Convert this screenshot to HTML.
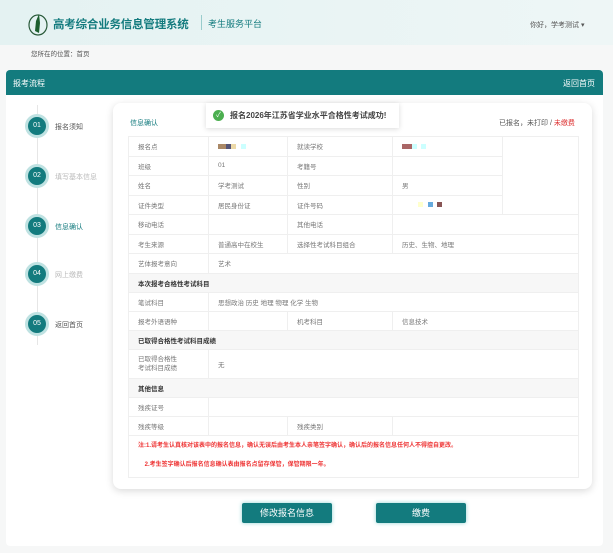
<!DOCTYPE html>
<html><head><meta charset="utf-8"><style>
*{margin:0;padding:0;box-sizing:border-box}
body{width:613px;height:553px;background:#f6f7f7;font-family:"Liberation Sans","Noto Sans CJK SC",sans-serif;position:relative;overflow:hidden;color:#666}
.a{position:absolute}
.hdr{left:0;top:0;width:613px;height:45px;background:linear-gradient(90deg,#e4f2f2,#eef6f6)}
.panel{left:6px;top:70px;width:597px;height:476px;background:#fff;border-radius:4px}
.bar{left:6px;top:70px;width:597px;height:25px;background:#137b7e;border-radius:4px 4px 0 0;color:#fff;font-size:8px}
.card{left:113px;top:103px;width:479px;height:386px;background:#fff;border-radius:8px;box-shadow:0 2px 8px rgba(0,0,0,.15)}
table{position:absolute;left:128px;top:136px;border-collapse:collapse;font-size:6.5px;color:#777;table-layout:fixed;width:450px}
td{border:1px solid #efefef;padding:0 0 0 9px;height:19px}
tr.r td{height:19.5px}
tr.s td{background:#f7f7f7;color:#333;font-weight:bold;height:19px}
.step{left:25px;width:24px;height:24px;border-radius:50%;background:#137b7e;border:3px solid #bfe2e2;color:#fff;font-size:7px;text-align:center;line-height:18px}
.sl{left:55px;font-size:7px}
.btn{top:503px;height:20px;background:#137b7e;color:#fff;font-size:9px;text-align:center;line-height:20px;border-radius:2px;box-shadow:0 0 4px #8fd3d3}
.blk{display:inline-block;width:5px;height:5px;vertical-align:middle}
</style></head><body>
<div class="a hdr"></div>
<svg class="a" style="left:27px;top:11px" width="22" height="26" viewBox="0 0 22 26"><ellipse cx="11" cy="14" rx="9" ry="10" fill="none" stroke="#2a5a3a" stroke-width="1.2"/><path d="M12 3 L9 10 L8 20 L12 22 L13 12 Z" fill="#1d5f2f"/></svg>
<div class="a" style="left:53px;top:16px;font-size:11.5px;font-weight:bold;color:#137b7e;letter-spacing:-0.2px">高考综合业务信息管理系统</div>
<div class="a" style="left:201px;top:15px;width:1px;height:15px;background:#9cc"></div>
<div class="a" style="left:208px;top:17px;font-size:9px;color:#137b7e">考生服务平台</div>
<div class="a" style="left:530px;top:20px;font-size:7px;color:#555">你好，学考测试 ▾</div>
<div class="a" style="left:31px;top:48px;font-size:6.5px;color:#555">您所在的位置：首页</div>
<div class="a panel"></div>
<div class="a bar"><span class="a" style="left:7px;top:8px">报考流程</span><span class="a" style="right:8px;top:8px">返回首页</span></div>
<div class="a" style="left:37px;top:105px;width:1px;height:240px;background:#e6e6e6"></div>
<div class="a step" style="top:114px">01</div><div class="a sl" style="top:122px;color:#555">报名须知</div>
<div class="a step" style="top:164px">02</div><div class="a sl" style="top:172px;color:#bbb">填写基本信息</div>
<div class="a step" style="top:214px">03</div><div class="a sl" style="top:222px;color:#137b7e">信息确认</div>
<div class="a step" style="top:262px">04</div><div class="a sl" style="top:270px;color:#bbb">网上缴费</div>
<div class="a step" style="top:312px">05</div><div class="a sl" style="top:320px;color:#555">返回首页</div>
<div class="a card"></div>
<div class="a" style="left:130px;top:118px;font-size:7px;color:#137b7e">信息确认</div>
<div class="a" style="left:499px;top:118px;font-size:7px;color:#555">已报名，未打印 / <span style="color:#d33">未缴费</span></div>
<div class="a" style="left:206px;top:103px;width:193px;height:25px;background:#fff;box-shadow:0 1px 5px rgba(0,0,0,.15);font-size:8px;font-weight:bold;color:#444;line-height:25px;padding-left:24px">报名2026年江苏省学业水平合格性考试成功!</div>
<div class="a" style="left:213px;top:110px;width:11px;height:11px;border-radius:50%;background:#4caf50;color:#fff;font-size:7px;text-align:center;line-height:11px">✓</div>
<table>
<colgroup><col style="width:80px"><col style="width:79px"><col style="width:105px"><col style="width:110px"><col style="width:76px"></colgroup>
<tr class="r"><td>报名点</td><td><span class="blk" style="background:#a86;width:8px"></span><span class="blk" style="background:#557"></span><span class="blk" style="background:#ecd9a8"></span> &nbsp;&nbsp;<span class="blk" style="background:#cff"></span></td><td>就读学校</td><td><span class="blk" style="background:#a66;width:10px"></span><span class="blk" style="background:#cff"></span> &nbsp;<span class="blk" style="background:#cff"></span></td><td rowspan="4"></td></tr>
<tr class="r"><td>班级</td><td>01</td><td>考籍号</td><td></td></tr>
<tr class="r"><td>姓名</td><td>学考测试</td><td>性别</td><td>男</td></tr>
<tr class="r"><td>证件类型</td><td>居民身份证</td><td>证件号码</td><td style="padding-left:25px"><span class="blk" style="background:#ffc"></span> &nbsp; <span class="blk" style="background:#6ad"></span> &nbsp;<span class="blk" style="background:#855"></span></td></tr>
<tr class="r"><td>移动电话</td><td></td><td>其他电话</td><td colspan="2"></td></tr>
<tr class="r"><td>考生来源</td><td>普通高中在校生</td><td>选择性考试科目组合</td><td colspan="2">历史、生物、地理</td></tr>
<tr class="r"><td>艺体报考意向</td><td colspan="4">艺术</td></tr>
<tr class="s"><td colspan="5">本次报考合格性考试科目</td></tr>
<tr><td>笔试科目</td><td colspan="4">思想政治 历史 地理 物理 化学 生物</td></tr>
<tr><td>报考外语语种</td><td></td><td>机考科目</td><td colspan="2">信息技术</td></tr>
<tr class="s"><td colspan="5">已取得合格性考试科目成绩</td></tr>
<tr><td style="height:29px;line-height:9px">已取得合格性<br>考试科目成绩</td><td colspan="4">无</td></tr>
<tr class="s"><td colspan="5">其他信息</td></tr>
<tr><td>残疾证号</td><td colspan="4"></td></tr>
<tr><td>残疾等级</td><td></td><td>残疾类别</td><td colspan="2"></td></tr>
<tr><td colspan="5" style="height:42px;color:#e33;font-weight:bold;line-height:19px;font-size:6px">注:1.请考生认真核对该表中的报名信息，确认无误后由考生本人亲笔签字确认，确认后的报名信息任何人不得擅自更改。<br>&nbsp;&nbsp;&nbsp;&nbsp;2.考生签字确认后报名信息确认表由报名点留存保管，保管期限一年。</td></tr>
</table>
<div class="a btn" style="left:242px;width:90px">修改报名信息</div>
<div class="a btn" style="left:376px;width:90px">缴费</div>
</body></html>
